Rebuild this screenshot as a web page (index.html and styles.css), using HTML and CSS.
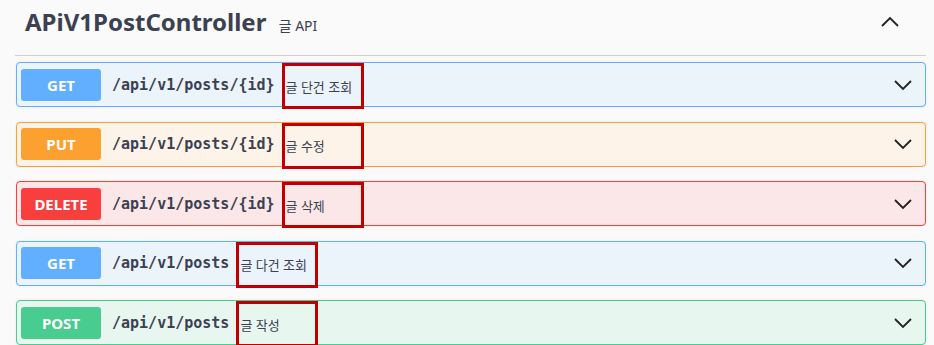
FILE: index.html
```html
<!DOCTYPE html>
<html lang="ko">
<head>
    <meta charset="UTF-8">
    <meta name="viewport" content="width=device-width, initial-scale=1.0">
    <title>APiV1PostController</title>
    <link rel="stylesheet" href="styles.css">
</head>
<body>

    <div class="tag">
        <div class="tag-header">
            <h3 class="tag-title">APiV1PostController <small>글 API</small></h3>
            <svg class="arrow" width="20" height="12" viewBox="0 0 20 12">
                <path d="M2 10 L10 2 L18 10" fill="none" stroke="#222" stroke-width="1.8"/>
            </svg>
        </div>

        <div class="opblock get">
            <span class="method">GET</span>
            <span class="path">/api/v1/posts/{id}</span>
            <span class="desc">글 단건 조회</span>
            <svg class="arrow" width="20" height="12" viewBox="0 0 20 12">
                <path d="M2 2 L10 10 L18 2" fill="none" stroke="#222" stroke-width="1.8"/>
            </svg>
        </div>

        <div class="opblock put">
            <span class="method">PUT</span>
            <span class="path">/api/v1/posts/{id}</span>
            <span class="desc">글 수정</span>
            <svg class="arrow" width="20" height="12" viewBox="0 0 20 12">
                <path d="M2 2 L10 10 L18 2" fill="none" stroke="#222" stroke-width="1.8"/>
            </svg>
        </div>

        <div class="opblock delete">
            <span class="method">DELETE</span>
            <span class="path">/api/v1/posts/{id}</span>
            <span class="desc">글 삭제</span>
            <svg class="arrow" width="20" height="12" viewBox="0 0 20 12">
                <path d="M2 2 L10 10 L18 2" fill="none" stroke="#222" stroke-width="1.8"/>
            </svg>
        </div>

        <div class="opblock get">
            <span class="method">GET</span>
            <span class="path">/api/v1/posts</span>
            <span class="desc">글 다건 조회</span>
            <svg class="arrow" width="20" height="12" viewBox="0 0 20 12">
                <path d="M2 2 L10 10 L18 2" fill="none" stroke="#222" stroke-width="1.8"/>
            </svg>
        </div>

        <div class="opblock post">
            <span class="method">POST</span>
            <span class="path">/api/v1/posts</span>
            <span class="desc">글 작성</span>
            <svg class="arrow" width="20" height="12" viewBox="0 0 20 12">
                <path d="M2 2 L10 10 L18 2" fill="none" stroke="#222" stroke-width="1.8"/>
            </svg>
        </div>
    </div>

</body>
</html>
```

FILE: styles.css
```css
/* Estilo geral */
body {
    margin: 0;
    background: #fafafa;
    font-family: "Noto Sans", "Noto Sans CJK KR", sans-serif;
    color: #3b4151;
}

.tag {
    padding: 0 8px 0 15px;
}

/* Cabeçalho do grupo */
.tag-header {
    display: flex;
    align-items: center;
    justify-content: space-between;
    height: 55px;
    padding: 0 26px 0 10px;
    border-bottom: 1px solid #cfcfcf;
    margin-bottom: 6px;
}

.tag-title {
    margin: 0;
    font-size: 24px;
    font-weight: 700;
    margin-top: -12px;
}

.tag-title small {
    font-size: 14px;
    font-weight: 400;
    margin-left: 6px;
}

.tag-header .arrow {
    margin-top: -12px;
}

/* Blocos de operação */
.opblock {
    display: flex;
    align-items: center;
    height: 45px;
    box-sizing: border-box;
    margin: 0 0 14.5px 1px;
    padding: 0 12px 0 4px;
    border: 1px solid;
    border-radius: 4px;
    box-shadow: 0 0 3px rgba(0, 0, 0, 0.08);
}

.method {
    width: 80px;
    height: 32px;
    line-height: 32px;
    border-radius: 3px;
    color: white;
    font-size: 15px;
    font-weight: 700;
    text-align: center;
    flex-shrink: 0;
}

.path {
    margin-left: 11px;
    font-family: "DejaVu Sans Mono", monospace;
    font-size: 15px;
    font-weight: 600;
    margin-right: 7px;
}

.desc {
    align-self: stretch;
    box-sizing: border-box;
    width: 82px;
    margin-bottom: -3px;
    border: 3px solid #c00000;
    padding-left: 1px;
    display: flex;
    align-items: center;
    font-size: 13px;
    color: #3b4151;
    white-space: nowrap;
}

.opblock .arrow {
    margin-left: auto;
}

.get {
    background: #ebf3fb;
    border-color: #61affe;
}
.get .method { background: #61affe; }

.put {
    background: #fdf3e8;
    border-color: #fca130;
}
.put .method { background: #fca130; }

.delete {
    background: #fbe7e7;
    border-color: #f93e3e;
}
.delete .method { background: #f93e3e; }

.post {
    background: #e8f6f0;
    border-color: #49cc90;
}
.post .method { background: #49cc90; }
```
